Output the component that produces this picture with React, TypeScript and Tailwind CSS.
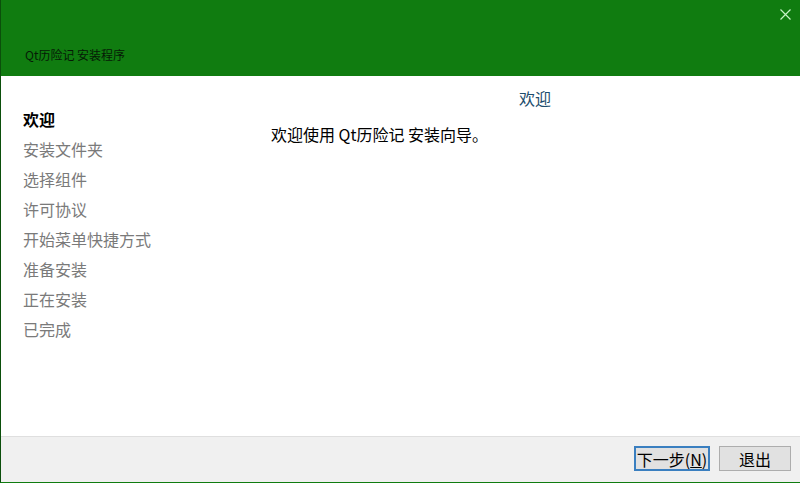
import React from "react";

const steps = [
  "欢迎",
  "安装文件夹",
  "选择组件",
  "许可协议",
  "开始菜单快捷方式",
  "准备安装",
  "正在安装",
  "已完成",
];

const font = { fontFamily: '"Noto Sans CJK SC", "Noto Sans", sans-serif' };

export default function App() {
  return (
    <div
      style={font}
      className="w-[800px] h-[483px] flex flex-col bg-white border-l border-b border-l-[#0b4f0b] border-b-[#107c10] overflow-hidden"
    >
      {/* Header */}
      <div className="relative h-[76px] shrink-0 bg-[#107c10] pl-[24px] pt-[41px]">
        <span className="text-[12px] leading-[18px] text-[#061a06]">Qt历险记 安装程序</span>
        <svg
          className="absolute top-[9px] right-[9px]"
          width="11"
          height="11"
          viewBox="0 0 11 11"
        >
          <path d="M0.5 0.5 L10.5 10.5 M10.5 0.5 L0.5 10.5" stroke="#c6f2c6" strokeWidth="1.2" />
        </svg>
      </div>

      {/* Body */}
      <div className="flex-1 flex min-h-0">
        {/* Steps */}
        <div className="w-[269px] shrink-0 pl-[22px] pt-[28px] flex flex-col">
          {steps.map((s, i) => (
            <div
              key={i}
              className={`text-[16px] leading-[30px] ${
                i === 0 ? "font-bold text-black" : "text-[#7a7a7a]"
              }`}
            >
              {s}
            </div>
          ))}
        </div>

        {/* Content */}
        <div className="flex-1 pt-[7px] flex flex-col">
          <div className="text-center text-[16px] leading-[30px] text-[#1d4d6d]">欢迎</div>
          <div className="mt-[6px] pl-[1px] text-[16px] leading-[30px] text-black">
            欢迎使用 Qt历险记 安装向导。
          </div>
        </div>
      </div>

      {/* Footer */}
      <div className="h-[46px] shrink-0 bg-[#f0f0f0] border-t border-[#dfdfdf] flex justify-end items-start pt-[9px] pr-[9px] gap-[9px]">
        <button className="w-[76px] h-[25px] bg-[#e1e1e1] border-2 border-[#3a7fc0] text-[16px] leading-[20px] text-black flex items-center justify-center">
          下一步(<span className="underline">N</span>)
        </button>
        <button className="w-[72px] h-[25px] bg-[#e1e1e1] border border-[#adadad] text-[16px] leading-[20px] text-black flex items-center justify-center">
          退出
        </button>
      </div>
    </div>
  );
}
